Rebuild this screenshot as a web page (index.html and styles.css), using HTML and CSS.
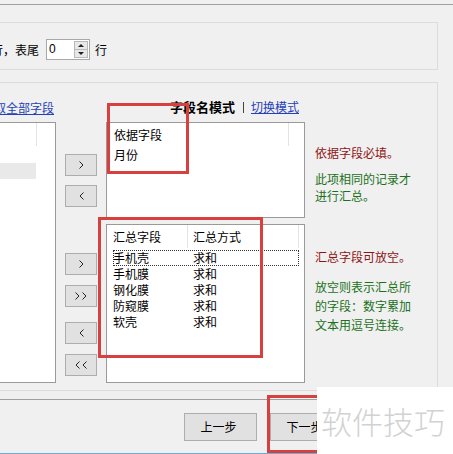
FILE: index.html
```html
<!DOCTYPE html>
<html lang="zh">
<head>
<meta charset="utf-8">
<link rel="stylesheet" href="styles.css">
</head>
<body>
<div class="window">
  <div class="topline"></div>
  <div class="group g1">
    <div class="row1">
      <span>行，表尾</span>
      <div class="spin">
        <span class="spin-val">0</span>
        <div class="spin-btns">
          <div class="spin-up"><i class="tri-up"></i></div>
          <div class="spin-down"><i class="tri-down"></i></div>
        </div>
      </div>
      <span class="unit">行</span>
    </div>
  </div>

  <div class="group g2">
    <div class="col-left">
      <a class="link all-link">取全部字段</a>
      <div class="list left-list">
        <div class="lhead"><div class="lhcell"></div></div>
        <div class="lrows">
          <div class="lrow"></div>
          <div class="lrow sel"></div>
        </div>
      </div>
    </div>

    <div class="col-btns">
      <button class="mv b1"><svg width="5" height="8" viewBox="0 0 5 8"><polyline points="0.5,0.5 4,4 0.5,7.5"/></svg></button>
      <button class="mv b2"><svg width="5" height="8" viewBox="0 0 5 8"><polyline points="4.5,0.5 1,4 4.5,7.5"/></svg></button>
      <button class="mv b3"><svg width="5" height="8" viewBox="0 0 5 8"><polyline points="0.5,0.5 4,4 0.5,7.5"/></svg></button>
      <button class="mv b4"><svg width="12" height="8" viewBox="0 0 12 8"><polyline points="0.5,0.5 4,4 0.5,7.5"/><polyline points="7.5,0.5 11,4 7.5,7.5"/></svg></button>
      <button class="mv b5"><svg width="5" height="8" viewBox="0 0 5 8"><polyline points="4.5,0.5 1,4 4.5,7.5"/></svg></button>
      <button class="mv b6"><svg width="12" height="8" viewBox="0 0 12 8"><polyline points="4.5,0.5 1,4 4.5,7.5"/><polyline points="11.5,0.5 8,4 11.5,7.5"/></svg></button>
    </div>

    <div class="col-mid">
      <div class="mode">
        <b class="mode-title">字段名模式</b>
        <i class="bar"></i>
        <a class="link">切换模式</a>
      </div>
      <div class="list l2">
        <div class="lhead">
          <div class="hcell h2a">依据字段</div>
        </div>
        <div class="rows2">
          <div class="row2">月份</div>
        </div>
      </div>
      <div class="list l3">
        <div class="lhead">
          <div class="hcell h3a">汇总字段</div>
          <div class="hcell h3b">汇总方式</div>
        </div>
        <div class="rows3">
          <div class="row3 focus"><span class="c1">手机壳</span><span class="c2">求和</span></div>
          <div class="row3"><span class="c1">手机膜</span><span class="c2">求和</span></div>
          <div class="row3"><span class="c1">钢化膜</span><span class="c2">求和</span></div>
          <div class="row3"><span class="c1">防窥膜</span><span class="c2">求和</span></div>
          <div class="row3"><span class="c1">软壳</span><span class="c2">求和</span></div>
        </div>
      </div>
    </div>

    <div class="col-notes">
      <p class="note red n1">依据字段必填。</p>
      <p class="note green n2">此项相同的记录才<br>进行汇总。</p>
      <p class="note red n3">汇总字段可放空。</p>
      <p class="note green n4">放空则表示汇总所<br>的字段：数字累加<br>文本用逗号连接。</p>
    </div>
  </div>

  <div class="footer">
    <button class="fbtn">上一步</button>
    <button class="fbtn">下一步</button>
  </div>
</div>

<div class="redbox r1"></div>
<div class="redbox r2"></div>
<div class="redbox r3"></div>
<div class="watermark">软件技巧</div>
</body>
</html>
```

FILE: styles.css
```css
* { box-sizing: border-box; }
html, body { margin: 0; padding: 0; }
body {
  width: 453px;
  height: 454px;
  overflow: hidden;
  position: relative;
  background: #f0f0f0;
  color: #000;
  font: 12px/16px "Noto Sans CJK SC", "Liberation Sans", sans-serif;
}
.window { width: 473px; margin-left: -20px; }
.topline { margin-top: 4px; border-top: 1px solid #a0a0a0; }

.group { width: 458px; border: 1px solid #dcdcdc; }

/* group 1 */
.g1 { margin-top: 17px; height: 48px; padding: 16px 0 0 10px; }
.row1 { display: flex; align-items: center; height: 21px; }
.spin {
  margin-left: 7px;
  width: 44px; height: 21px;
  border: 1px solid #a8a8a8;
  background: #fff;
  display: flex;
  align-items: stretch;
}
.spin-val { flex: 1; padding-left: 2px; line-height: 19px; font-family: "Liberation Sans", sans-serif; font-size: 12px; }
.spin-btns { width: 15px; display: flex; flex-direction: column; padding: 1px 1px 1px 0; }
.spin-up, .spin-down {
  flex: 1;
  background: #e8e8e8;
  border: 1px solid #b9b9b9;
  display: flex; align-items: center; justify-content: center;
}
.spin-up { border-bottom: none; }
.tri-up, .tri-down { width: 0; height: 0; border-left: 3px solid transparent; border-right: 3px solid transparent; }
.tri-up { border-bottom: 3px solid #222; }
.tri-down { border-top: 3px solid #222; }
.unit { margin-left: 5px; }

/* group 2 */
.g2 { margin-top: 12px; height: 309px; display: flex; align-items: flex-start; }

.link { color: #2540b8; text-decoration: underline; cursor: pointer; }

.list { background: #fff; border: 1px solid #9a9a9a; }
.lhead { height: 23px; display: flex; }

.col-left { width: 75px; }
.all-link { display: block; margin-top: 17px; padding-left: 13px; white-space: nowrap; line-height: 16px; }
.left-list { margin-top: 6px; height: 261px; }
.lhcell { width: 55px; border-right: 1px solid #e3e3e3; }
.lrows { padding-top: 1px; }
.lrow { height: 16px; width: 54px; }
.lrow.sel { background: #e9e9e9; }

.col-btns { margin-left: 9px; width: 32px; display: flex; flex-direction: column; }
.mv {
  width: 32px; height: 22px; padding: 0;
  background: #e1e1e1;
  border: 1px solid #adadad;
  display: flex; align-items: center; justify-content: center;
}
.mv svg { display: block; }
.mv polyline { fill: none; stroke: #222; stroke-width: 1; }
.b1 { margin-top: 71px; }
.b2 { margin-top: 9px; }
.b3 { margin-top: 46px; }
.b4 { margin-top: 10px; }
.b5 { margin-top: 15px; }
.b6 { margin-top: 10px; }

.col-mid { margin-left: 9px; width: 199px; }
.mode {
  margin-top: 16px; height: 16px;
  display: flex; justify-content: flex-end; align-items: center;
  padding-right: 6px; white-space: nowrap;
}
.mode-title { font-size: 13px; font-weight: bold; }
.bar { width: 1px; height: 11px; background: #444; margin: 0 7px 0 8px; }
.l2 { margin-top: 7px; height: 96px; }
.hcell { line-height: 23px; border-right: 1px solid #e3e3e3; white-space: nowrap; }
.h2a { width: 182px; padding-left: 7px; }
.rows2 { padding: 1px 0 0 7px; }
.row2 { height: 16px; line-height: 16px; }

.l3 { margin-top: 6px; height: 159px; }
.h3a { width: 81px; padding-left: 6px; }
.h3b { width: 111px; padding-left: 5px; }
.rows3 { padding-top: 2px; }
.row3 { margin-left: 6px; width: 186px; height: 16px; line-height: 16px; display: flex; white-space: nowrap; }
.row3.focus { outline: 1px dotted #333; outline-offset: -1px; }
.c1 { width: 74px; }
.c2 { padding-left: 6px; }

.col-notes { margin-left: 10px; flex: 1; }
.note { margin: 0; white-space: nowrap; }
.red { color: #8e1515; }
.green { color: #1c701c; }
.n1 { margin-top: 62px; line-height: 16px; }
.n2 { margin-top: 9px; line-height: 17px; }
.n3 { margin-top: 45px; line-height: 16px; }
.n4 { margin-top: 12px; line-height: 19px; }

/* footer */
.footer {
  margin-top: 8px;
  height: 55px;
  border-top: 1px solid #a0a0a0;
  border-bottom: 1px solid #6aaed4;
  padding: 13px 0 0 204px;
  display: flex; align-items: flex-start; gap: 13px;
}
.fbtn {
  width: 73px; height: 28px; padding: 0 4px 0 0;
  background: #e1e1e1;
  border: 1px solid #adadad;
  font: 12px/16px "Noto Sans CJK SC", sans-serif;
  color: #000;
}

/* annotations over the screenshot */
.redbox { position: absolute; border: 3px solid #d6403f; }
.r1 { left: 107px; top: 103px; width: 82px; height: 71px; }
.r2 { left: 98px; top: 217px; width: 165px; height: 141px; }
.r3 { left: 267px; top: 395px; width: 100px; height: 58px; }
.watermark {
  position: absolute; left: 317px; top: 387px; right: 0; bottom: 0;
  background: #fff;
  color: #d2d2d2;
  font: 300 31px/1 "Noto Sans CJK SC", sans-serif;
  padding: 18px 0 0 4px;
  white-space: nowrap;
}
```
